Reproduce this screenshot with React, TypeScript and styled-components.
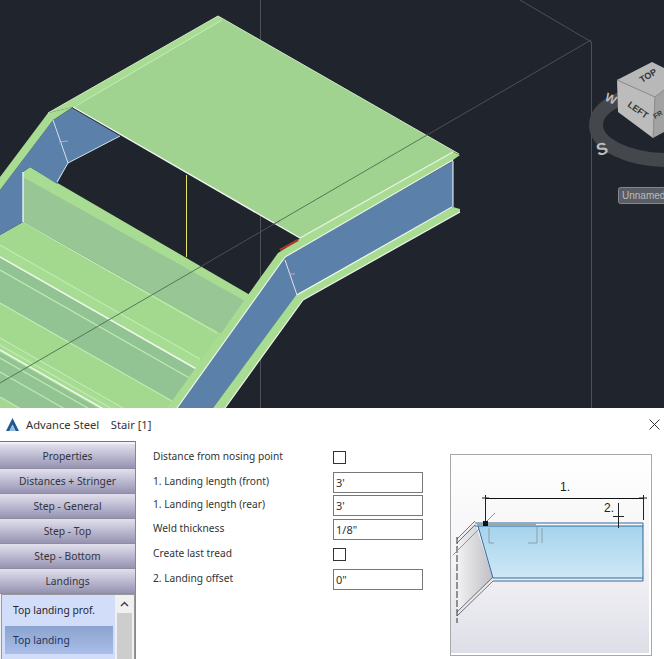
import styled, { createGlobalStyle } from "styled-components";

const GlobalStyle = createGlobalStyle`
	html, body {
		margin: 0;
		padding: 0;
		background: #fff;
	}
	body {
		width: 664px;
		height: 659px;
		overflow: hidden;
		font-family: "Noto Sans", "Liberation Sans", Arial, sans-serif;
	}
`;

const tabs = [
	"Properties",
	"Distances + Stringer",
	"Step - General",
	"Step - Top",
	"Step - Bottom",
	"Landings",
];

// stair bands run parallel across the treads, slope about 0.57
const band = (y0: number, y1: number) =>
	`0,${y0} 200,${y0 + 114} 200,${y1 + 114} 0,${y1}`;
const line = (y0: number) => `M0,${y0}L200,${y0 + 114}`;

const App = () => {
	return (
		<Page>
			<GlobalStyle />
			<Viewport>
				<svg width="664" height="408" viewBox="0 0 664 408">
					<rect width="664" height="408" fill="#20252d" />
					{/* bounding box lines */}
					<path d="M260.5 0V408M520 0L591.5 42V408" stroke="#4d5057" fill="none" />
					{/* treads and risers */}
					<polygon points="0,235 23,222 222,333 200,408 0,408" fill="#a2d98f" />
					<polygon points={band(257, 303)} fill="#92c392" />
					<polygon points={band(352, 397)} fill="#92c392" />
					<polygon points={band(245, 257)} fill="#a7dd93" />
					<polygon points={band(340, 352)} fill="#a7dd93" />
					<path
						d={[line(245), line(270), line(303), line(338), line(345), line(358), line(372), line(397)].join("")}
						stroke="#c3eab4"
						strokeWidth="1.1"
						fill="none"
					/>
					<path d={line(257) + line(350)} stroke="#f1f7ee" strokeWidth="1.5" fill="none" />
					<path d="M23,222L217,333" stroke="#c3eab4" strokeWidth="1.1" />
					{/* riser board */}
					<polygon points="23,175 245,300 221,333 23,222" fill="#98c795" />
					<polygon points="23,172 30,167 250,295 245,301 23,177" fill="#a8dc92" />
					{/* left stringer */}
					<polygon points="53,120 72,108 120,136 68,163 57,184 30,167 23,172 23,222 0,235 0,190" fill="#5b80a9" />
					<polygon points="0,177 48,113 73,107 53,120 0,190" fill="#a8dc92" />
					<path d="M23,172V222" stroke="#fff" strokeWidth="1.2" />
					<path d="M53,120L68,163M120,136L68,163L57,182" stroke="#d5e2ea" strokeWidth="1" fill="none" />
					<path d="M59,142L68,141" stroke="#d79ac0" />
					{/* landing top */}
					<polygon points="73,107 218,16 459,154 453,152 300,238" fill="#a0d390" />
					<polygon points="48,113 218,16 222,20 73,107" fill="#a8dc92" />
					<path d="M74,107L222,20" stroke="#c8ecba" fill="none" />
					<path d="M48,113L218,16L459,154" stroke="#cfe8c4" fill="none" />
					<path d="M73,107L300,238" stroke="#f2f7f0" strokeWidth="1.4" />
					<path d="M186.5,175V257" stroke="#e8e060" />
					{/* front stringer */}
					<polygon points="285,257 453,161 453,207 297,295 213,408 177,408" fill="#5b80a9" />
					<polygon points="278,253 298,240 300,238 453,152 460,155 453,160 285,257 177,408 167,408" fill="#a8dc92" />
					<polygon points="297,294 453,207 460,209 460,212 303,300 225,408 213,408" fill="#a8dc92" />
					<path d="M285,257L177,408M285,257L453,160M300,238L453,152" stroke="#eef6ea" strokeWidth="1.2" fill="none" />
					<path d="M303,300L460,212M297,295L452,207M303,300L225,408" stroke="#eef6ea" strokeWidth="1.2" fill="none" />
					<path d="M453,161V207" stroke="#fff" />
					<path d="M285,260L297,295" stroke="#e3e3ee" />
					<path d="M289,274L295,274" stroke="#d79ac0" />
					<path d="M280,250L298,240" stroke="#a83a26" strokeWidth="2.5" />
					{/* axis line, green where it crosses the stair */}
					<path d="M0,383L200,267M280,220.5L427,135" stroke="#4f7a55" fill="none" />
					<path d="M200,267L280,220.5M427,135L591,40" stroke="#4d5054" fill="none" />
					{/* view cube */}
					<ellipse cx="668" cy="125" rx="72" ry="35" fill="none" stroke="#44474c" strokeWidth="14" />
					<polygon points="617,80 652,62 664,68 664,90 655,97" fill="#b8b8b8" />
					<polygon points="617,80 655,97 653,138 618,112" fill="#bcbcbc" />
					<polygon points="655,97 664,90 664,132 653,138" fill="#a2a2a2" />
					<path d="M617,80L655,97L664,90M655,97L653,138" stroke="#8e8e8e" fill="none" />
					<CubeLabel x="642" y="83" fontSize="9" transform="rotate(-32 642 83)">TOP</CubeLabel>
					<CubeLabel x="627" y="106" fontSize="9" transform="rotate(35 627 106)">LEFT</CubeLabel>
					<CubeLabel x="655" y="119" fontSize="7" transform="rotate(-30 655 119)">FR</CubeLabel>
					<CompassLetter x="598" y="156" fontSize="17" transform="rotate(-15 598 156)">S</CompassLetter>
					<CompassLetter x="604" y="100" fontSize="12" transform="rotate(25 604 100)">W</CompassLetter>
					<rect x="618.5" y="187.5" width="60" height="16" rx="2" fill="#5a5d63" stroke="#85878c" />
					<UnnamedText x="622" y="199">Unnamed</UnnamedText>
				</svg>
			</Viewport>
			<Dialog>
				<TitleBar>
					<TitleLeft>
						<svg width="13" height="13" viewBox="0 0 13 13">
							<path d="M6.5 0L13 13H9.5L6.5 6.5L3.5 13H0Z" fill="#24588f" />
							<path d="M6.5 6.5L9.5 13H3.5Z" fill="#8dbde0" />
						</svg>
						<span>Advance Steel&nbsp;&nbsp;&nbsp; Stair [1]</span>
					</TitleLeft>
					<svg width="11" height="11" viewBox="0 0 11 11">
						<path d="M0.5 0.5L10.5 10.5M10.5 0.5L0.5 10.5" stroke="#333" />
					</svg>
				</TitleBar>
				<Body>
					<Sidebar>
						{tabs.map((tab) => (
							<TabButton key={tab}>{tab}</TabButton>
						))}
						<ListBox>
							<ListItems>
								<ListItem>Top landing prof.</ListItem>
								<ListItem $selected>Top landing</ListItem>
							</ListItems>
							<ScrollBar>
								<ScrollArrow>
									<svg width="9" height="6" viewBox="0 0 9 6">
										<path d="M1 5L4.5 1.5L8 5" stroke="#444" strokeWidth="1.5" fill="none" />
									</svg>
								</ScrollArrow>
								<ScrollThumb />
							</ScrollBar>
						</ListBox>
					</Sidebar>
					<Form>
						<Row $height={26}>
							<Label>Distance from nosing point</Label>
							<CheckBox />
						</Row>
						<Row $height={24}>
							<Label>1. Landing length (front)</Label>
							<Field>3'</Field>
						</Row>
						<Row $height={23}>
							<Label>1. Landing length (rear)</Label>
							<Field>3'</Field>
						</Row>
						<Row $height={25}>
							<Label>Weld thickness</Label>
							<Field>1/8"</Field>
						</Row>
						<Row $height={25}>
							<Label>Create last tread</Label>
							<CheckBox />
						</Row>
						<Row $height={24}>
							<Label>2. Landing offset</Label>
							<Field>0"</Field>
						</Row>
					</Form>
					<Preview>
						<svg width="198" height="198" viewBox="0 0 198 198">
							<defs>
								<linearGradient id="bg" x1="0" y1="0" x2="0" y2="1">
									<stop offset="0" stopColor="#ffffff" />
									<stop offset="0.55" stopColor="#f3f3f6" />
									<stop offset="1" stopColor="#dedee8" />
								</linearGradient>
								<linearGradient id="blue" x1="0" y1="0" x2="0" y2="1">
									<stop offset="0" stopColor="#a5d3ec" />
									<stop offset="1" stopColor="#cfe8f6" />
								</linearGradient>
								<linearGradient id="grey" x1="0" y1="0" x2="1" y2="0">
									<stop offset="0" stopColor="#f2f2f4" />
									<stop offset="1" stopColor="#bfbfc4" />
								</linearGradient>
							</defs>
							<rect width="198" height="198" fill="url(#bg)" />
							<polygon points="6,86 24,68 42,123 6,158" fill="url(#grey)" />
							<path d="M6,84L24,66M6,88L24,70M6,157L42,122M6,161L42,126" stroke="#6f7377" fill="none" />
							<path d="M6,82V168" stroke="#333" strokeDasharray="7 2" />
							<path d="M2,100L44,58" stroke="#8f9296" />
							<polygon points="27,71 192,71 192,123 42,123" fill="url(#blue)" />
							<path d="M24,68H192M24,71H192M42,123H192M42,126H192M27,71L42,123M192,68V126" stroke="#2f6b9b" fill="none" />
							<path d="M26,69.5H85" stroke="#9fa6a8" strokeWidth="3" />
							<path d="M38,73V88H43M86,72V88H77M91,73V88" stroke="#8f9ea6" fill="none" />
							<path d="M34,43.5H192" stroke="#111" strokeWidth="1.2" />
							<path d="M34.5,40V68M192.5,40V65M31,43H38M188,43H196M167.5,48V73M162,61.5H173" stroke="#222" fill="none" />
							<PreviewText x="109" y="36">1.</PreviewText>
							<PreviewText x="153" y="57">2.</PreviewText>
							<rect x="32" y="66" width="5" height="5" fill="#111" />
						</svg>
					</Preview>
				</Body>
			</Dialog>
		</Page>
	);
};

export default App;

//STYLES
const Page = styled.div`
	width: 664px;
	height: 659px;
	display: flex;
	flex-direction: column;
	overflow: hidden;
`;

const Viewport = styled.div`
	height: 408px;
	flex: none;
	line-height: 0;
`;

const CubeLabel = styled.text`
	font-family: "Liberation Sans", Arial, sans-serif;
	font-weight: 700;
	fill: #33363a;
`;

const CompassLetter = styled.text`
	font-family: "Liberation Sans", Arial, sans-serif;
	font-weight: 700;
	fill: #bdbdbd;
`;

const UnnamedText = styled.text`
	font-family: "Liberation Sans", Arial, sans-serif;
	font-size: 10px;
	fill: #bcbcbc;
`;

const PreviewText = styled.text`
	font-family: "Liberation Sans", Arial, sans-serif;
	font-size: 12px;
	fill: #222;
`;

const Dialog = styled.div`
	flex: 1;
	display: flex;
	flex-direction: column;
	background: #fff;
	min-height: 0;
`;

const TitleBar = styled.div`
	height: 33px;
	flex: none;
	display: flex;
	align-items: center;
	justify-content: space-between;
	padding: 0 4px 0 6px;
	box-sizing: border-box;
`;

const TitleLeft = styled.div`
	display: flex;
	align-items: center;
	gap: 7px;
	font-size: 11.2px;
	color: #333;
`;

const Body = styled.div`
	flex: 1;
	display: flex;
	min-height: 0;
`;

const Sidebar = styled.div`
	width: 136px;
	flex: none;
	box-sizing: border-box;
	padding-top: 2px;
	border-top: 1px solid #777;
	border-right: 1px solid #888;
	background: #f2f2f4;
`;

const TabButton = styled.div`
	height: 25px;
	box-sizing: border-box;
	display: flex;
	align-items: center;
	justify-content: center;
	font-size: 10.3px;
	color: #34343c;
	background: linear-gradient(#e2e0ec, #b8b6ce 55%, #9693b0);
	border-bottom: 1px solid #8e8ba2;
`;

const ListBox = styled.div`
	display: flex;
	height: 76px;
	margin-left: 1px;
	border: 1px solid #999;
	border-bottom: none;
	background: #d2def9;
`;

const ListItems = styled.div`
	flex: 1;
	padding: 1px 0 0 3px;
`;

const ListItem = styled.div<{ $selected?: boolean }>`
	height: 28px;
	margin-bottom: 2px;
	padding-left: 8px;
	display: flex;
	align-items: center;
	font-size: 10.3px;
	color: ${(props) => (props.$selected ? "#22335a" : "#1f2430")};
	background: ${(props) =>
		props.$selected ? "linear-gradient(#8ba3cf, #a9bee8)" : "transparent"};
`;

const ScrollBar = styled.div`
	width: 19px;
	flex: none;
	margin-left: 2px;
	display: flex;
	flex-direction: column;
	background: #f0f0f0;
`;

const ScrollArrow = styled.div`
	height: 18px;
	display: flex;
	align-items: center;
	justify-content: center;
`;

const ScrollThumb = styled.div`
	flex: 1;
	margin: 0 2px;
	background: #cdcdcd;
`;

const Form = styled.div`
	width: 294px;
	flex: none;
	box-sizing: border-box;
	padding: 3px 0 0 17px;
	align-self: flex-start;
`;

const Row = styled.div<{ $height: number }>`
	height: ${(props) => props.$height}px;
	display: flex;
	align-items: center;
`;

const Label = styled.div`
	width: 180px;
	flex: none;
	padding-bottom: 3px;
	font-size: 10.2px;
	color: #333;
`;

const CheckBox = styled.div`
	width: 13px;
	height: 13px;
	box-sizing: border-box;
	border: 1px solid #333;
	background: #fff;
`;

const Field = styled.div`
	width: 90px;
	height: 21px;
	box-sizing: border-box;
	border: 1px solid #777;
	padding-left: 2px;
	display: flex;
	align-items: center;
	font-size: 11px;
	color: #333;
`;

const Preview = styled.div`
	width: 200px;
	height: 200px;
	flex: none;
	margin: 13px 0 0 20px;
	border: 1px solid #a8a8a8;
	line-height: 0;
`;
